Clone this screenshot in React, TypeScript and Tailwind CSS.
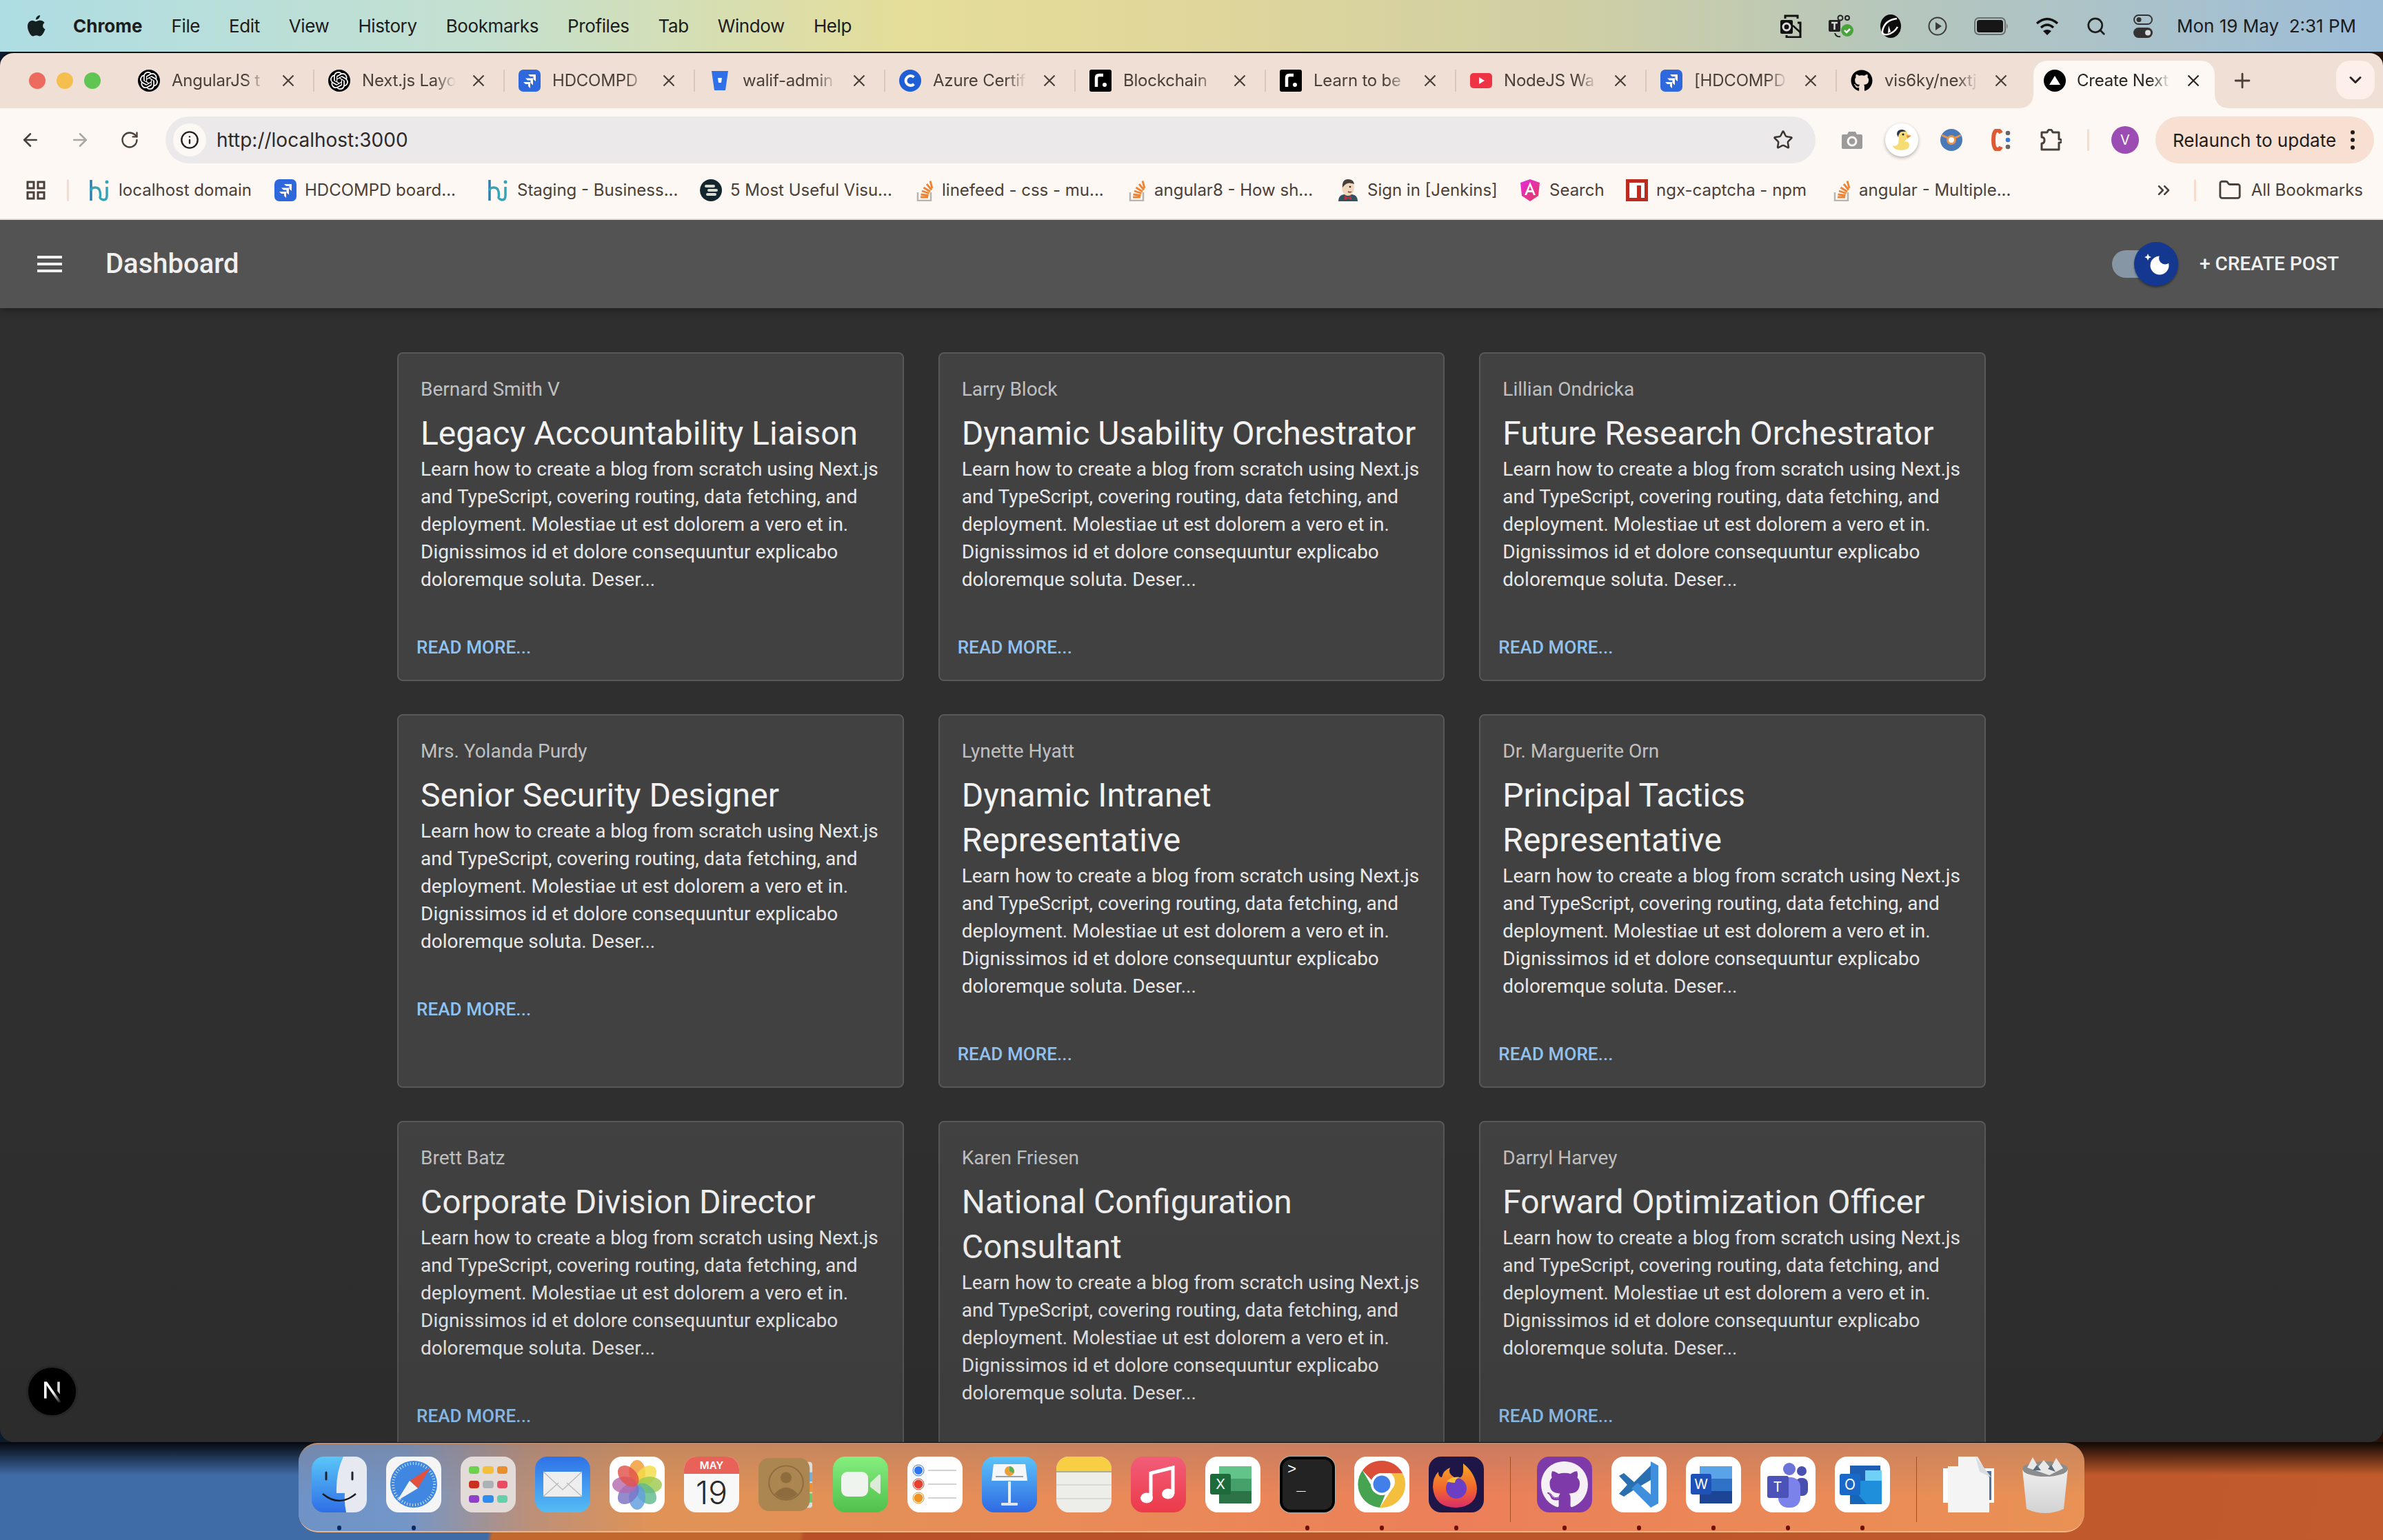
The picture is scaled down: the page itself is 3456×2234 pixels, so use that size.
import { ArrowLeft, ArrowRight, RotateCw, Info, Star, Plus, ChevronDown, ChevronsRight, Folder, Search } from 'lucide-react';
import { FaGithub } from 'react-icons/fa';
import { SiOpenai } from 'react-icons/si';

const posts = [
  { author: 'Bernard Smith V', title: 'Legacy Accountability Liaison' },
  { author: 'Larry Block', title: 'Dynamic Usability Orchestrator' },
  { author: 'Lillian Ondricka', title: 'Future Research Orchestrator' },
  { author: 'Mrs. Yolanda Purdy', title: 'Senior Security Designer' },
  { author: 'Lynette Hyatt', title: 'Dynamic Intranet Representative' },
  { author: 'Dr. Marguerite Orn', title: 'Principal Tactics Representative' },
  { author: 'Brett Batz', title: 'Corporate Division Director' },
  { author: 'Karen Friesen', title: 'National Configuration Consultant' },
  { author: 'Darryl Harvey', title: 'Forward Optimization Officer' },
];

const body =
  'Learn how to create a blog from scratch using Next.js and TypeScript, covering routing, data fetching, and deployment. Molestiae ut est dolorem a vero et in. Dignissimos id et dolore consequuntur explicabo doloremque soluta. Deser...';

/* favicons */
const GptFav = () => (
  <div className="w-8 h-8 rounded-full bg-black flex items-center justify-center shrink-0">
    <SiOpenai className="w-[26px] h-[26px] text-white" />
  </div>
);
const JiraFav = () => (
  <svg viewBox="0 0 32 32" className="w-8 h-8 shrink-0">
    <rect width="32" height="32" rx="7" fill="#2f68dc" />
    <path d="M14 7h11v10l-3.5-3V10H17z M10 12.5h11v10l-3.5-3V15.500h-4.500z M7 18h10v9l-3-3v-3h-4z" fill="#fff" />
  </svg>
);
const BitbucketFav = () => (
  <svg viewBox="0 0 32 32" className="w-8 h-8 shrink-0">
    <path d="M4 2h24l-4 28H8z" fill="#2f6fe8" />
    <path d="M13 12h6l-1 7h-4z" fill="#fff" />
  </svg>
);
const CourseraFav = () => (
  <svg viewBox="0 0 32 32" className="w-8 h-8 shrink-0">
    <circle cx="16" cy="16" r="16" fill="#1f5fd6" />
    <path d="M21.500 11a7 7 0 1 0 0 10" fill="none" stroke="#fff" strokeWidth="4" />
  </svg>
);
const RemixFav = () => (
  <svg viewBox="0 0 32 32" className="w-8 h-8 shrink-0">
    <rect width="32" height="32" rx="3" fill="#000" />
    <path d="M10 25V12q0-4 4-4h6" fill="none" stroke="#fff" strokeWidth="4.500" />
    <circle cx="22" cy="22" r="3" fill="#fff" />
  </svg>
);
const YoutubeFav = () => (
  <svg viewBox="0 0 32 32" className="w-8 h-8 shrink-0">
    <rect y="5" width="32" height="22" rx="5" fill="#ee3344" />
    <path d="M13 11l8 5-8 5z" fill="#fff" />
  </svg>
);
const NextFav = () => (
  <svg viewBox="0 0 32 32" className="w-8 h-8 shrink-0">
    <circle cx="16" cy="16" r="16" fill="#000" />
    <path d="M16 9l8 13H8z" fill="#fff" />
  </svg>
);
const HiFav = () => (
  <svg viewBox="0 0 32 32" className="w-8 h-8 shrink-0">
    <path d="M4 1v30" stroke="#2b7fb0" strokeWidth="3.500" fill="none" />
    <path d="M4 17q0-5 6-5t7 6 0 8 5 4q5 0 5-6V11" stroke="#36a4b8" strokeWidth="3.500" fill="none" />
    <circle cx="27" cy="4" r="2.500" fill="#36a4b8" />
  </svg>
);
const DarkFav = () => (
  <svg viewBox="0 0 32 32" className="w-8 h-8 shrink-0">
    <circle cx="16" cy="16" r="16" fill="#13262e" />
    <rect x="7" y="8" width="15" height="4" rx="2" fill="#d9dbd2" />
    <rect x="11" y="14" width="15" height="4" rx="2" fill="#d9dbd2" />
    <rect x="9" y="20" width="15" height="4" rx="2" fill="#d9dbd2" />
  </svg>
);
const StackFav = () => (
  <svg viewBox="0 0 26 32" className="w-[26px] h-8 shrink-0">
    <path d="M3 19v12h19V19" fill="none" stroke="#b8b4ae" strokeWidth="2.500" />
    <path d="M7 26h11M7.500 22l11 1.500M9 17l10.500 3.500M11.500 12l9.500 6M16 7l7 8.500M21 2.500l3 10.500" stroke="#ee8433" strokeWidth="2.800" fill="none" />
  </svg>
);
const JenkinsFav = () => (
  <svg viewBox="0 0 32 32" className="w-8 h-8 shrink-0">
    <path d="M2 32q0-9 8-10h12q8 1 8 10z" fill="#335061" />
    <ellipse cx="16" cy="12" rx="9" ry="12" fill="#efd6bd" />
    <path d="M8 12Q7 0 16 0q8 0 9 7-8-3-12 0-3 2-5 5z" fill="#45403a" />
    <path d="M11 24l5 2.500 5-2.500v6l-5-2.500-5 2.500z" fill="#cc2d2d" />
    <circle cx="19" cy="11" r="1.300" fill="#222" />
    <path d="M16 18q3 1.500 5 0" stroke="#7a3b2e" strokeWidth="1.500" fill="none" />
  </svg>
);
const AngularFav = () => (
  <svg viewBox="0 0 32 32" className="w-8 h-8 shrink-0">
    <defs>
      <linearGradient id="ng" x1="0" y1="0" x2="1" y2="1">
        <stop offset="0" stopColor="#e32be0" />
        <stop offset="1" stopColor="#e83a5a" />
      </linearGradient>
    </defs>
    <path d="M16 0l14 5-2 19-12 8-12-8L2 5z" fill="url(#ng)" />
    <path d="M16 4l8 19h-3l-1.700-4h-6.600L11 23H8zm0 6l-2.200 6h4.400z" fill="#fff" />
  </svg>
);
const NpmFav = () => (
  <svg viewBox="0 0 32 32" className="w-8 h-8 shrink-0">
    <rect width="32" height="32" fill="#bd2a20" />
    <rect x="5" y="5" width="22" height="22" fill="#fff" />
    <rect x="16" y="9" width="6" height="18" fill="#bd2a20" />
  </svg>
);

const TabClose = ({ className }: { className: string }) => (
  <svg viewBox="0 0 18 18" className={className}>
    <path d="M1.500 1.500l15 15M16.500 1.500l-15 15" fill="none" stroke="currentColor" strokeWidth="2.200" />
  </svg>
);

const tabs = [
  { label: 'AngularJS t', icon: <GptFav /> },
  { label: 'Next.js Layo', icon: <GptFav /> },
  { label: 'HDCOMPD', icon: <JiraFav /> },
  { label: 'walif-admin', icon: <BitbucketFav /> },
  { label: 'Azure Certif', icon: <CourseraFav /> },
  { label: 'Blockchain', icon: <RemixFav /> },
  { label: 'Learn to be', icon: <RemixFav /> },
  { label: 'NodeJS Wa', icon: <YoutubeFav /> },
  { label: '[HDCOMPD', icon: <JiraFav /> },
  { label: 'vis6ky/nextj', icon: <FaGithub className="w-8 h-8 text-black shrink-0" /> },
];

const bookmarks = [
  { label: 'localhost domain', icon: <HiFav />, w: 'w-[270px]' },
  { label: 'HDCOMPD board...', icon: <JiraFav />, w: 'w-[308px]' },
  { label: 'Staging - Business...', icon: <HiFav />, w: 'w-[309px]' },
  { label: '5 Most Useful Visu...', icon: <DarkFav />, w: 'w-[313px]' },
  { label: 'linefeed - css - mu...', icon: <StackFav />, w: 'w-[308px]' },
  { label: 'angular8 - How sh...', icon: <StackFav />, w: 'w-[303px]' },
  { label: 'Sign in [Jenkins]', icon: <JenkinsFav />, w: 'w-[264px]' },
  { label: 'Search', icon: <AngularFav />, w: 'w-[155px]' },
  { label: 'ngx-captcha - npm', icon: <NpmFav />, w: 'w-[300px]' },
  { label: 'angular - Multiple...', icon: <StackFav />, w: 'w-[300px]' },
];

/* menu bar glyphs */
const MenuExtras = () => (
  <div className="flex items-center gap-[39px]">
    <svg viewBox="0 0 32 34" className="w-8 h-[34px]">
      <path d="M8 6V2h18v4M10 30v3h20V12h-4" fill="none" stroke="#111" strokeWidth="3" />
      <rect x="1" y="8" width="18" height="20" rx="2" fill="#111" />
      <circle cx="10" cy="18" r="5" fill="none" stroke="#ddd" strokeWidth="3" />
      <path d="M19 16l11 10" stroke="#111" strokeWidth="2.500" />
    </svg>
    <svg viewBox="0 0 36 34" className="w-9 h-[34px]">
      <rect y="8" width="17" height="17" rx="2" fill="#222" />
      <path d="M4 12h9M8.500 12v10" stroke="#ddd" strokeWidth="2.500" />
      <circle cx="17" cy="5" r="3.500" fill="none" stroke="#222" strokeWidth="2" />
      <circle cx="27" cy="5" r="3" fill="none" stroke="#222" strokeWidth="2" />
      <path d="M9 27q2 6 8 5" fill="none" stroke="#222" strokeWidth="2" />
      <circle cx="27" cy="23" r="9" fill="#4aa33c" />
      <path d="M23 23l3 3 5-5" stroke="#fff" strokeWidth="2.500" fill="none" />
    </svg>
    <svg viewBox="0 0 30 34" className="w-[30px] h-[34px]">
      <ellipse cx="15" cy="17" rx="15" ry="17" fill="#0c0c0c" />
      <path d="M24 6Q6 8 3 24q-1 6 7 5 10-2 15-11" fill="none" stroke="#fff" strokeWidth="2.500" />
      <path d="M12 16l-1 11 4-2z" fill="#fff" />
    </svg>
    <svg viewBox="0 0 28 30" className="w-7 h-[30px]">
      <circle cx="14" cy="15" r="12.500" fill="none" stroke="#3a3a3a" strokeWidth="2" />
      <path d="M11 9l9 6-9 6z" fill="#3a3a3a" />
    </svg>
    <svg viewBox="0 0 50 26" className="w-[50px] h-[26px]">
      <rect x="1" y="1" width="44" height="24" rx="6" fill="none" stroke="#6b6f70" strokeWidth="2" />
      <rect x="4" y="4" width="38" height="18" rx="3.500" fill="#161616" />
      <path d="M47 9q3 4 0 8z" fill="#6b6f70" />
    </svg>
    <svg viewBox="0 0 34 28" className="w-[34px] h-7">
      <path d="M2 10q15-13 30 0M8 16q9-8 18 0" fill="none" stroke="#111" strokeWidth="3.500" />
      <path d="M17 27l-6-6q6-4 12 0z" fill="#111" />
    </svg>
    <Search className="w-[30px] h-[30px] text-[#1d1d1d]" strokeWidth={2.2} />
    <svg viewBox="0 0 28 34" className="w-7 h-[34px]">
      <rect x="1" y="1" width="26" height="13" rx="6.500" fill="none" stroke="#333" strokeWidth="2" />
      <circle cx="8" cy="7.500" r="3.500" fill="#333" />
      <rect y="19" width="28" height="15" rx="7.500" fill="#333" />
      <circle cx="21" cy="26.500" r="4" fill="#ddd" />
    </svg>
  </div>
);

const Hamburger = () => (
  <svg viewBox="0 0 36 24" className="w-9 h-6 shrink-0">
    <path d="M0 0h36v4H0zM0 10h36v4H0zM0 20h36v4H0z" fill="#f0f0f0" />
  </svg>
);

const ThemeSwitch = () => (
  <div className="relative w-[96px] h-16 flex items-center">
    <div className="w-[70px] h-10 rounded-full bg-[#8796a5]" />
    <div className="absolute right-0 top-0 w-16 h-16 rounded-full bg-[#14378f] shadow-[0_2px_3px_rgba(0,0,0,0.4)]">
      <svg viewBox="0 0 64 64" className="w-16 h-16">
        <circle cx="37" cy="34" r="13.500" fill="#fff" />
        <circle cx="45" cy="23.500" r="9" fill="#14378f" />
        <path d="M20 17l1.500 3.500L25 22l-3.500 1.500L20 27l-1.500-3.500L15 22l3.500-1.500z" fill="#fff" />
      </svg>
    </div>
  </div>
);

const PostCard = ({ author, title }: { author: string; title: string }) => (
  <div className="rounded-[8px] border-2 border-[#585858] bg-[#414141]">
    <div className="p-8">
      <p className="text-[28px] leading-[40px] text-[#c0c0c0] mb-[11px]">{author}</p>
      <h5 className="text-[48px] leading-[65px] text-[#f2f2f2]">{title}</h5>
      <p className="text-[28px] leading-[40px] text-[#e8e8e8]">{body}</p>
    </div>
    <div className="p-4">
      <button className="px-[10px] py-2 text-[26px] leading-[45px] font-medium tracking-[0.1px] text-[#90c2f0] uppercase">
        Read More...
      </button>
    </div>
  </div>
);

/* dock tiles */
const Finder = () => (
  <svg viewBox="0 0 80 81" className="w-20 h-[81px]">
    <defs>
      <linearGradient id="fb" x1="0" y1="0" x2="0" y2="1">
        <stop offset="0" stopColor="#5ac6f8" />
        <stop offset="1" stopColor="#2f6ee6" />
      </linearGradient>
      <clipPath id="fc">
        <rect width="80" height="81" rx="18" />
      </clipPath>
    </defs>
    <g clipPath="url(#fc)">
      <rect width="80" height="81" fill="url(#fb)" />
      <path d="M46 0h34v81H50q-3-14-2-28H36q-1-30 10-53z" fill="#e6e9f0" />
    </g>
    <path d="M21 23v10M59 23v10" stroke="#20242a" strokeWidth="3" strokeLinecap="round" />
    <path d="M16 54q24 20 48 0" stroke="#1b1b1b" strokeWidth="2.500" fill="none" />
  </svg>
);
const Safari = () => (
  <svg viewBox="0 0 80 81" className="w-20 h-[81px]">
    <rect width="80" height="81" rx="18" fill="#f5f5f5" />
    <circle cx="40" cy="40" r="34" fill="#3f87e0" />
    <circle cx="40" cy="40" r="30" fill="none" stroke="#d9e8f8" strokeWidth="4" strokeDasharray="1 3" />
    <path d="M64 16L34 35l12 11z" fill="#e2513d" />
    <path d="M16 64l18-29 12 11z" fill="#f3f3f3" />
  </svg>
);
const Launchpad = () => (
  <div className="w-20 h-[81px] rounded-[18px] bg-[#e2dbd8] grid grid-cols-3 gap-x-[5px] gap-y-[10px] px-[12px] py-[14px]">
    <div className="rounded-[4px] bg-[#6cd24e]" />
    <div className="rounded-[4px] bg-[#f4bf3a]" />
    <div className="rounded-[4px] bg-[#ea8f30]" />
    <div className="rounded-[4px] bg-[#c9301f]" />
    <div className="rounded-[4px] bg-[#aab2b6]" />
    <div className="rounded-[4px] bg-[#ea4a62]" />
    <div className="rounded-[4px] bg-[#8f3fc9]" />
    <div className="rounded-[4px] bg-[#2f8df0]" />
    <div className="rounded-[4px] bg-[#64cfa8]" />
  </div>
);
const Mail = () => (
  <svg viewBox="0 0 80 81" className="w-20 h-[81px]">
    <defs>
      <linearGradient id="ml" x1="0" y1="0" x2="0" y2="1">
        <stop offset="0" stopColor="#2f72e8" />
        <stop offset="1" stopColor="#55bdf5" />
      </linearGradient>
    </defs>
    <rect width="80" height="81" rx="18" fill="url(#ml)" />
    <rect x="12" y="22" width="56" height="36" rx="3" fill="#eeeeee" />
    <path d="M12 22l28 26 28-26M12 58l22-20M68 58L46 38" fill="none" stroke="#bdbdbd" strokeWidth="1.500" />
  </svg>
);
const Photos = () => {
  const petals = ['#f09a33', '#f3dc45', '#9fcb4d', '#5fb98b', '#5f9fdf', '#7d72c4', '#b46bb0', '#e2524b'];
  return (
    <svg viewBox="0 0 80 81" className="w-20 h-[81px]">
      <rect width="80" height="81" rx="18" fill="#fff" />
      {petals.map((c, i) => (
        <ellipse key={c} cx="40" cy="23" rx="12" ry="18" fill={c} fillOpacity="0.82" transform={`rotate(${i * 45} 40 41)`} />
      ))}
    </svg>
  );
};
const Calendar = () => (
  <div className="w-20 h-[81px] rounded-[18px] overflow-hidden bg-[#f8f8f8] flex flex-col items-center font-[Inter,sans-serif]">
    <div className="w-full h-[25px] bg-[#e8625a] text-white text-[15px] leading-[25px] font-semibold text-center">MAY</div>
    <div className="text-[46px] leading-[54px] font-light text-[#2a2a2a]">19</div>
  </div>
);
const Contacts = () => (
  <svg viewBox="0 0 84 81" className="w-20 h-[81px]">
    <path d="M70 6h8q4 0 4 5v60q0 5-4 5h-8z" fill="#dcdcdc" />
    <rect x="74" y="22" width="8" height="14" fill="#6ab3e8" />
    <rect x="74" y="38" width="8" height="14" fill="#ee9332" />
    <rect x="74" y="54" width="8" height="14" fill="#6fc66a" />
    <rect width="78" height="81" rx="16" fill="#ab8651" />
    <circle cx="42" cy="38" r="26" fill="none" stroke="#8e6c3e" strokeWidth="2" />
    <circle cx="42" cy="30" r="8.500" fill="#8e6c3e" />
    <path d="M24 55q18-20 36 0-18 16-36 0z" fill="#8e6c3e" />
  </svg>
);
const FaceTime = () => (
  <svg viewBox="0 0 80 81" className="w-20 h-[81px]">
    <defs>
      <linearGradient id="ft" x1="0" y1="0" x2="0" y2="1">
        <stop offset="0" stopColor="#85ee7f" />
        <stop offset="1" stopColor="#50c04c" />
      </linearGradient>
    </defs>
    <rect width="80" height="81" rx="18" fill="url(#ft)" />
    <rect x="12" y="22" width="39" height="36" rx="9" fill="#f0f4ee" />
    <path d="M54 38l13-12q2-1 2 2v24q0 3-2 2L54 44z" fill="#dcebd8" />
  </svg>
);
const Reminders = () => (
  <svg viewBox="0 0 80 81" className="w-20 h-[81px]">
    <rect width="80" height="81" rx="18" fill="#fff" />
    <circle cx="16" cy="20" r="6.500" fill="#2f74f0" stroke="#fff" strokeWidth="1" />
    <circle cx="16" cy="20" r="8" fill="none" stroke="#2f74f0" />
    <circle cx="16" cy="40" r="6.500" fill="#e8402f" />
    <circle cx="16" cy="40" r="8" fill="none" stroke="#e8402f" />
    <circle cx="16" cy="60" r="6.500" fill="#ee9325" />
    <circle cx="16" cy="60" r="8" fill="none" stroke="#ee9325" />
    <path d="M30 20h41M30 40h41M30 60h41" stroke="#c4c4c4" strokeWidth="1.500" />
  </svg>
);
const Keynote = () => (
  <svg viewBox="0 0 80 81" className="w-20 h-[81px]">
    <defs>
      <linearGradient id="kn" x1="0" y1="0" x2="0" y2="1">
        <stop offset="0" stopColor="#5cc3f8" />
        <stop offset="1" stopColor="#2f6ae4" />
      </linearGradient>
    </defs>
    <rect width="80" height="81" rx="18" fill="url(#kn)" />
    <path d="M17 11h46l3 24H14z" fill="#f4f6f8" />
    <circle cx="40" cy="21" r="7" fill="#e8a13a" />
    <path d="M40 21V14a7 7 0 0 1 6 10z" fill="#5fae5a" />
    <rect x="38" y="36" width="4" height="32" fill="#e8eef4" />
    <rect x="28" y="67" width="24" height="4" rx="1" fill="#dfe5ea" />
    <rect x="20" y="28" width="40" height="2" fill="#98a2ad" />
  </svg>
);
const Notes = () => (
  <svg viewBox="0 0 80 81" className="w-20 h-[81px]">
    <defs>
      <clipPath id="nc">
        <rect width="80" height="81" rx="18" />
      </clipPath>
    </defs>
    <g clipPath="url(#nc)">
      <rect width="80" height="81" fill="#ededea" />
      <rect width="80" height="22" fill="#f8cf44" />
      <rect y="21" width="80" height="2" fill="#b5ad86" />
      <path d="M0 41h80M0 61h80" stroke="#d2d2d0" strokeWidth="1.500" />
    </g>
  </svg>
);
const Music = () => (
  <svg viewBox="0 0 80 81" className="w-20 h-[81px]">
    <defs>
      <linearGradient id="mu" x1="0" y1="0" x2="0" y2="1">
        <stop offset="0" stopColor="#f25d78" />
        <stop offset="1" stopColor="#ec3a4a" />
      </linearGradient>
    </defs>
    <rect width="80" height="81" rx="18" fill="url(#mu)" />
    <path d="M29 24l32-8v38" fill="none" stroke="#fff" strokeWidth="5" />
    <path d="M29 22v38" stroke="#fff" strokeWidth="5" />
    <ellipse cx="23" cy="60" rx="9" ry="7.500" fill="#fff" />
    <ellipse cx="54" cy="54" rx="9" ry="7.500" fill="#fff" />
  </svg>
);
const Office = ({ letter, top, mid, low, tile }: { letter: string; top: string; mid: string; low: string; tile: string }) => (
  <svg viewBox="0 0 80 81" className="w-20 h-[81px]">
    <rect width="80" height="81" rx="18" fill="#fff" />
    <rect x="20" y="14" width="47" height="18" fill={top} />
    <rect x="20" y="32" width="47" height="18" fill={mid} />
    <rect x="20" y="50" width="47" height="18" fill={low} />
    <rect x="7" y="25" width="30" height="30" rx="3" fill={tile} />
    <text x="22" y="47" textAnchor="middle" fontFamily="Inter, sans-serif" fontSize="20" fill="#fff">
      {letter}
    </text>
  </svg>
);
const Terminal = () => (
  <div className="w-20 h-[81px] rounded-[16px] border-[4px] border-black bg-[#232323] shadow-[0_0_0_1px_#a8b0b0] pl-[7px] pt-[4px] text-white text-[22px] leading-[24px] font-[Liberation_Mono,monospace] whitespace-pre">
    {'>\n _'}
  </div>
);
const Chrome = () => (
  <svg viewBox="0 0 80 81" className="w-20 h-[81px]">
    <rect width="80" height="81" rx="18" fill="#fff" />
    <path d="M40 6a34 34 0 0 1 30 18H40a16 16 0 0 0-15 10L12 20A34 34 0 0 1 40 6z" fill="#db4f38" />
    <path d="M12 20l15 26a16 16 0 0 0 18 9L37 74A34 34 0 0 1 12 20z" fill="#46a352" />
    <path d="M70 24a34 34 0 0 1-33 50l17-26a16 16 0 0 0-1-24z" fill="#f4bf3d" />
    <circle cx="40" cy="40" r="16" fill="#fff" />
    <circle cx="40" cy="40" r="12.500" fill="#437fe8" />
  </svg>
);
const Firefox = () => (
  <svg viewBox="0 0 80 81" className="w-20 h-[81px]">
    <defs>
      <linearGradient id="fx" x1="0" y1="0" x2="0" y2="1">
        <stop offset="0" stopColor="#f7a825" />
        <stop offset="0.6" stopColor="#f0622f" />
        <stop offset="1" stopColor="#d92d6a" />
      </linearGradient>
    </defs>
    <rect width="80" height="81" rx="18" fill="#1e1647" />
    <path d="M50 10q18 14 20 36 0 26-30 28Q8 74 6 44q0-14 8-22 0 8 5 8 2-10 12-14-4 8 6 14 12 4 13-8 0-6 0-12z" fill="url(#fx)" />
    <circle cx="40" cy="46" r="15" fill="#6a3fc4" />
    <path d="M26 36q8-8 20-6-8 2-8 8-6 0-12-2z" fill="#f7c12f" />
  </svg>
);
const GithubApp = () => (
  <div className="w-20 h-[81px] rounded-[18px] bg-[#7e3aa8] flex items-center justify-center">
    <FaGithub className="w-[70px] h-[70px] text-[#f4f0f6]" />
  </div>
);
const VsCode = () => (
  <svg viewBox="0 0 80 81" className="w-20 h-[81px]">
    <rect width="80" height="81" rx="18" fill="#fff" />
    <path d="M11 28l7-4 15 13 24-24v21L33 48 18 58l-7-4 12-13z" fill="#2a70b0" />
    <path d="M57 7l11 6v55l-11 6-28-28 9-8 19 17z" fill="#3f8fdc" />
  </svg>
);
const Teams = () => (
  <svg viewBox="0 0 80 81" className="w-20 h-[81px]">
    <rect width="80" height="81" rx="18" fill="#fff" />
    <circle cx="42" cy="18" r="9" fill="#6b72d8" />
    <circle cx="60" cy="21" r="7" fill="#4a50b0" />
    <rect x="51" y="31" width="18" height="26" rx="8" fill="#4a50b0" />
    <rect x="26" y="30" width="32" height="44" rx="14" fill="#7b83ea" />
    <rect x="10" y="28" width="31" height="32" rx="3" fill="#4b52b8" />
    <text x="25" y="51" textAnchor="middle" fontFamily="Inter, sans-serif" fontSize="20" fill="#fff">
      T
    </text>
  </svg>
);
const Outlook = () => (
  <svg viewBox="0 0 80 81" className="w-20 h-[81px]">
    <rect width="80" height="81" rx="18" fill="#fff" />
    <rect x="22" y="13" width="44" height="22" fill="#1c5fb4" />
    <rect x="44" y="20" width="24" height="24" fill="#6fd0f8" />
    <path d="M22 35h46v34H22z" fill="#1f8fdc" />
    <path d="M22 42l24 27H22z" fill="#1566b8" />
    <rect x="7" y="25" width="30" height="31" rx="3" fill="#1a68c8" />
    <text x="22" y="48" textAnchor="middle" fontFamily="Inter, sans-serif" fontSize="21" fill="#fff">
      O
    </text>
  </svg>
);
const Docs = () => (
  <svg viewBox="0 0 80 81" className="w-20 h-[81px] overflow-visible">
    <rect x="0" y="17" width="74" height="50" fill="#fff" />
    <rect x="50" y="21" width="20" height="42" fill="#52729a" />
    <path d="M7 14v67h60V30L50 0H22v14z" fill="#f4f4f4" />
    <path d="M47 0l6 22 17 8z" fill="#dadce0" />
  </svg>
);
const Trash = () => (
  <svg viewBox="0 0 80 81" className="w-20 h-[81px] overflow-visible">
    <defs>
      <linearGradient id="tr" x1="0" y1="0" x2="0" y2="1">
        <stop offset="0" stopColor="#eeeeee" />
        <stop offset="1" stopColor="#d2d2d2" />
      </linearGradient>
    </defs>
    <path d="M7 18h66l-6 58q-27 12-54 0z" fill="url(#tr)" />
    <ellipse cx="40" cy="18" rx="33" ry="11" fill="#8c8c8c" />
    <path d="M14 16l8-15 8 14 8-10 10 12 8-15 10 15-20 10z" fill="#e8e8e8" />
    <path d="M22 20l6-8 6 8zM44 18l5-6 6 10z" fill="#5a6b7c" />
  </svg>
);

const DockItem = ({ children, dot }: { children: React.ReactNode; dot?: 'blue' | 'red' }) => (
  <div className="w-20 flex flex-col items-center">
    <div className="h-[81px]">{children}</div>
    {dot === 'blue' && <div className="mt-[19px] w-[6px] h-[7px] rounded-full bg-[#0a2a66]" />}
    {dot === 'red' && <div className="mt-[19px] w-[6px] h-[7px] rounded-full bg-[#6e0f00]" />}
  </div>
);

const Dock = () => (
  <div className="flex justify-center h-[142px] bg-[linear-gradient(to_bottom,rgba(0,0,0,0.92),rgba(0,0,0,0)_48px),linear-gradient(100deg,#3f6ba6_0,#3f6ba6_21%,#c2682f_21.2%,#c2682f_34%,#b84f28_34.2%,#c25c2c_100%)]">
    <div className="mt-[1px] w-[2590px] h-[130px] rounded-[28px] border-t-2 border-b-2 border-b-[#f4b585] border-t-[#c08a68] pl-[19px] pt-[18px] flex items-start gap-[28px] bg-[linear-gradient(to_bottom,rgba(130,110,110,0.3),rgba(130,110,110,0)_60%),linear-gradient(to_right,#6f93c6_0,#7396c8_6%,#bd9078_13%,#e09356_20%,#e98b58_45%,#ec7f59_65%,#e99255_100%)]">
      <DockItem dot="blue"><Finder /></DockItem>
      <DockItem dot="blue"><Safari /></DockItem>
      <DockItem><Launchpad /></DockItem>
      <DockItem><Mail /></DockItem>
      <DockItem><Photos /></DockItem>
      <DockItem><Calendar /></DockItem>
      <DockItem><Contacts /></DockItem>
      <DockItem><FaceTime /></DockItem>
      <DockItem><Reminders /></DockItem>
      <DockItem><Keynote /></DockItem>
      <DockItem><Notes /></DockItem>
      <DockItem><Music /></DockItem>
      <DockItem><Office letter="X" top="#62c488" mid="#46a06a" low="#2d7348" tile="#1d6b3a" /></DockItem>
      <DockItem dot="red"><Terminal /></DockItem>
      <DockItem dot="red"><Chrome /></DockItem>
      <DockItem dot="red"><Firefox /></DockItem>
      <div className="w-px h-[95px] mx-[10px] bg-[#a84f1f]" />
      <DockItem dot="red"><GithubApp /></DockItem>
      <DockItem dot="red"><VsCode /></DockItem>
      <DockItem dot="red"><Office letter="W" top="#5aa3e8" mid="#2f72c8" low="#1d4596" tile="#1f52b8" /></DockItem>
      <DockItem dot="red"><Teams /></DockItem>
      <DockItem dot="red"><Outlook /></DockItem>
      <div className="w-px h-[95px] mx-[10px] bg-[#a84f1f]" />
      <DockItem><Docs /></DockItem>
      <DockItem><Trash /></DockItem>
    </div>
  </div>
);

export default function App() {
  return (
    <div className="w-[3456px] h-[2234px] flex flex-col overflow-hidden bg-[linear-gradient(to_right,#0b1a2c,#0b1a2c_60%,#2a1208)] font-[Inter,sans-serif]">
      {/* mac menu bar */}
      <div className="h-[75px] shrink-0 flex items-center pl-[40px] pr-[35px] text-[26px] text-[#1c1c1c] bg-[linear-gradient(to_right,#aedde3_0%,#c4e0d0_20%,#e5dd99_38%,#e0d69a_50%,#cfcfa4_66%,#b5c6bd_80%,#9dbdd8_100%)]">
        <svg viewBox="0 0 26 32" className="w-[26px] h-8 mr-[40px] shrink-0">
          <path d="M18 0c.3 3-2.500 6.500-6 6.500C11.700 3.300 14.800.3 18 0zM24.500 11c-3.500 2.200-3 7.500 1 9.500-1.500 4-4.500 10-8 10-1.800 0-2.800-1.200-4.800-1.200s-3.200 1.200-4.800 1.200C4.500 30.500 0 22.500 0 16.500 0 10.500 3.800 7.800 7 7.800c2 0 3.800 1.400 5.200 1.400 1.300 0 3.300-1.600 5.700-1.600 2.200 0 5 1 6.600 3.400z" fill="#14201f" />
        </svg>
        <span className="font-bold mr-[42px]">Chrome</span>
        <div className="flex items-center gap-[42px] tracking-[-0.4px]">
          <span>File</span>
          <span>Edit</span>
          <span>View</span>
          <span>History</span>
          <span>Bookmarks</span>
          <span>Profiles</span>
          <span>Tab</span>
          <span>Window</span>
          <span>Help</span>
        </div>
        <div className="ml-auto flex items-center gap-[35px]">
          <MenuExtras />
          <span className="whitespace-pre w-[264px]">{'Mon 19 May  2:31 PM'}</span>
        </div>
      </div>

      {/* browser window */}
      <div className="h-[2017px] shrink-0 flex flex-col overflow-hidden rounded-[20px] border-t-2 border-[#111]">
        {/* tab strip */}
        <div className="h-[80px] shrink-0 flex items-start pt-[11px] bg-[#f0dfd4] text-[24px] tracking-[-0.2px] text-[#4a4038]">
          <div className="w-[180px] h-[58px] pl-[42px] flex items-center gap-[16px]">
            <div className="w-6 h-6 rounded-full bg-[#ec6a5e]" />
            <div className="w-6 h-6 rounded-full bg-[#f4bf4f]" />
            <div className="w-6 h-6 rounded-full bg-[#61c554]" />
          </div>
          {tabs.map((t, i) => (
            <div key={t.label} className="w-[276px] h-[58px] pl-[20px] flex items-center">
              <div className="w-8 flex justify-center shrink-0">{t.icon}</div>
              <span className="ml-[17px] w-[136px] overflow-hidden whitespace-nowrap [mask-image:linear-gradient(to_right,#000_78%,transparent)]">{t.label}</span>
              <TabClose className="ml-[24px] w-[18px] h-[18px] shrink-0" />
              {i < 9 && <div className="ml-[27px] w-[2px] h-8 bg-[#dcc7ba] shrink-0" />}
            </div>
          ))}
          <div className="relative w-[263px] ml-[9px] h-[69px] pl-[15px] pb-[11px] flex items-center rounded-t-[20px] bg-[#fdf8f4] text-[#2b2522]">
            <NextFav />
            <span className="ml-[16px] w-[136px] overflow-hidden whitespace-nowrap [mask-image:linear-gradient(to_right,#000_78%,transparent)]">Create Next</span>
            <TabClose className="ml-[24px] w-[18px] h-[18px] shrink-0" />
            <div className="absolute left-[-18px] bottom-0 w-[18px] h-[18px] bg-[radial-gradient(circle_at_0_0,transparent_17px,#fdf8f4_18px)]" />
            <div className="absolute right-[-18px] bottom-0 w-[18px] h-[18px] bg-[radial-gradient(circle_at_100%_0,transparent_17px,#fdf8f4_18px)]" />
          </div>
          <Plus className="ml-[23px] mt-[12px] w-[34px] h-[34px] shrink-0" strokeWidth={2} />
          <div className="ml-[119px] w-[56px] h-[56px] flex items-center justify-center rounded-[20px] bg-[#fdf0ea]">
            <ChevronDown className="w-[28px] h-[28px] text-[#2b2522]" strokeWidth={2.6} />
          </div>
        </div>

        {/* address row */}
        <div className="h-[80px] shrink-0 flex items-start pt-[12px] pl-[8px] bg-[#fdf8f4] text-[#4a4038]">
          <div className="w-[72px] h-[68px] flex items-center justify-center">
            <ArrowLeft className="w-[30px] h-[30px]" strokeWidth={2} />
          </div>
          <div className="w-[72px] h-[68px] flex items-center justify-center">
            <ArrowRight className="w-[30px] h-[30px] text-[#ada6a0]" strokeWidth={2} />
          </div>
          <div className="w-[72px] h-[68px] flex items-center justify-center">
            <RotateCw className="w-[28px] h-[28px]" strokeWidth={2} />
          </div>
          <div className="ml-[16px] w-[2393px] h-[68px] rounded-full bg-[#ece9ea] flex items-center pl-[11px] pr-[32px]">
            <div className="w-[48px] h-[48px] rounded-full bg-[#fdf8f4] flex items-center justify-center">
              <Info className="w-[28px] h-[28px] text-[#1f1f1f]" strokeWidth={2} />
            </div>
            <span className="ml-[15px] text-[28px] text-[#2e2a28]">http://localhost:3000</span>
            <Star className="ml-auto w-[30px] h-[30px] text-[#3b332e]" strokeWidth={2} />
          </div>
          <div className="ml-[17px] w-[72px] h-[68px] flex items-center justify-center">
            <svg viewBox="0 0 30 26" className="w-[30px] h-[26px]">
              <path d="M2 5h6l2-4h10l2 4h6q2 0 2 2v17q0 2-2 2H2q-2 0-2-2V7q0-2 2-2z" fill="#9b9b9b" />
              <circle cx="15" cy="15" r="6" fill="none" stroke="#fdf8f4" strokeWidth="3" />
            </svg>
          </div>
          <div className="w-[72px] h-[68px] flex items-center justify-center">
            <div className="w-[48px] h-[48px] rounded-full bg-white shadow-[0_2px_5px_rgba(0,0,0,0.3)] flex items-center justify-center">
              <svg viewBox="0 0 30 32" className="w-[30px] h-[32px]">
                <path d="M10 6q0-5 6-5 7 0 7 6l6 3-6 3q-1 3-4 5 7 0 7 6t-11 7Q3 31 2 24q4 2 7-1 3-4 1-17z" fill="#f6dc72" />
                <path d="M8 8q0-7 7-7 4 0 6 3-7-1-9 2-2 3-2 6z" fill="#27344a" />
                <path d="M22 9l7 1-6 4z" fill="#e98a3c" />
                <circle cx="17" cy="8" r="1.500" fill="#222" />
              </svg>
            </div>
          </div>
          <div className="w-[72px] h-[68px] flex items-center justify-center">
            <svg viewBox="0 0 32 32" className="w-8 h-8">
              <circle cx="16" cy="16" r="16" fill="#4a79b8" />
              <path d="M2 9l11 5M30 9l-11 5" stroke="#e8934e" strokeWidth="3" />
              <circle cx="16" cy="16" r="5.500" fill="#fff" stroke="#e8934e" strokeWidth="3" />
            </svg>
          </div>
          <div className="w-[72px] h-[68px] flex items-center justify-center">
            <svg viewBox="0 0 30 32" className="w-[30px] h-8">
              <path d="M15 6q-2-4-5-4-6 0-6 14t6 14q3 0 5-4" fill="none" stroke="#dd5a32" strokeWidth="6" />
              <circle cx="25" cy="6" r="3.300" fill="#666" />
              <circle cx="25" cy="16" r="3.300" fill="#3a7bd5" />
              <circle cx="25" cy="26" r="3.300" fill="#666" />
            </svg>
          </div>
          <div className="w-[72px] h-[68px] flex items-center justify-center">
            <svg viewBox="0 0 32 32" className="w-8 h-8">
              <path d="M3 5h8q1-4 4-4t4 4h9v10q4 0 4 2.500T28 20v10H3v-9q4 0 4-4.500T3 12z" fill="none" stroke="#4a4038" strokeWidth="3" strokeLinejoin="round" />
            </svg>
          </div>
          <div className="ml-[17px] mt-[18px] w-[3px] h-[32px] rounded-full bg-[#f5dccd]" />
          <div className="ml-[32px] mt-[14px] w-[40px] h-[40px] rounded-full bg-[#9c4db3] flex items-center justify-center text-[20px] text-white">V</div>
          <div className="ml-[24px] w-[317px] h-[68px] rounded-full bg-[#f7e0d2] flex items-center pl-[25px] text-[26px] text-[#221c18]">
            <span className="whitespace-nowrap">Relaunch to update</span>
            <div className="ml-auto mr-[28px] flex flex-col gap-[5px]">
              <div className="w-[6px] h-[6px] rounded-full bg-[#221c18]" />
              <div className="w-[6px] h-[6px] rounded-full bg-[#221c18]" />
              <div className="w-[6px] h-[6px] rounded-full bg-[#221c18]" />
            </div>
          </div>
        </div>

        {/* bookmarks row */}
        <div className="h-[82px] shrink-0 flex items-center pl-[38px] pr-[29px] pb-[2px] bg-[#fdf8f4] border-b-2 border-[#e8e0da] text-[24px] text-[#4a4038]">
          <svg viewBox="0 0 28 28" className="w-7 h-7 shrink-0">
            <path d="M2 2h9v9H2zM17 2h9v9h-9zM2 17h9v9H2zM17 17h9v9h-9z" fill="none" stroke="#4a4038" strokeWidth="3" />
          </svg>
          <div className="ml-[31px] mr-[28px] w-[3px] h-8 rounded-full bg-[#f5dccd] shrink-0" />
          {bookmarks.map((b) => (
            <div key={b.label} className={`flex items-center gap-[12px] shrink-0 whitespace-nowrap ${b.w}`}>
              {b.icon}
              <span>{b.label}</span>
            </div>
          ))}
          <ChevronsRight className="ml-auto w-[28px] h-[28px] shrink-0" strokeWidth={2.2} />
          <div className="ml-[30px] mr-[32px] w-[3px] h-8 rounded-full bg-[#f5dccd] shrink-0" />
          <Folder className="w-[34px] h-[34px] shrink-0" strokeWidth={2} />
          <span className="ml-[14px] whitespace-nowrap">All Bookmarks</span>
        </div>

        {/* the page */}
        <div className="relative flex-1 min-h-0 overflow-hidden bg-[#2f2f2f] font-[Roboto,sans-serif]">
          <header className="relative z-10 h-[128px] flex items-center pl-[54px] pr-[64px] bg-[#535353] shadow-[0_4px_12px_rgba(0,0,0,0.3)] text-[#f0f0f0]">
            <Hamburger />
            <h6 className="ml-[63px] text-[40px] font-medium">Dashboard</h6>
            <div className="ml-auto flex items-center">
              <ThemeSwitch />
              <span className="ml-[31px] text-[28px] font-medium">+ CREATE POST</span>
            </div>
          </header>
          <main className="w-[2304px] mx-auto mt-[64px] grid grid-cols-3 gap-x-[50px] gap-y-[48px]">
            {posts.map((p) => (
              <PostCard key={p.title} author={p.author} title={p.title} />
            ))}
          </main>
          <div className="absolute inset-x-0 bottom-0 h-[500px] pointer-events-none bg-[linear-gradient(to_bottom,transparent,rgba(0,0,0,0.07))]" />
          <div className="absolute left-[38px] bottom-[36px] w-[75px] h-[75px] rounded-full bg-black border-[3px] border-[#262626] flex items-center justify-center">
            <svg viewBox="0 0 30 30" className="w-[36px] h-[36px]">
              <defs>
                <linearGradient id="nx" x1="0" y1="0" x2="1" y2="1">
                  <stop offset="0.5" stopColor="#fff" />
                  <stop offset="1" stopColor="#fff" stopOpacity="0" />
                </linearGradient>
              </defs>
              <path d="M5 3h3v20H5z" fill="#fff" />
              <path d="M5 3h3.500L26 28h-3.800z" fill="url(#nx)" />
              <path d="M21 3h3v15l-3-4z" fill="#fff" fillOpacity="0.85" />
            </svg>
          </div>
        </div>
      </div>

      <Dock />
    </div>
  );
}
